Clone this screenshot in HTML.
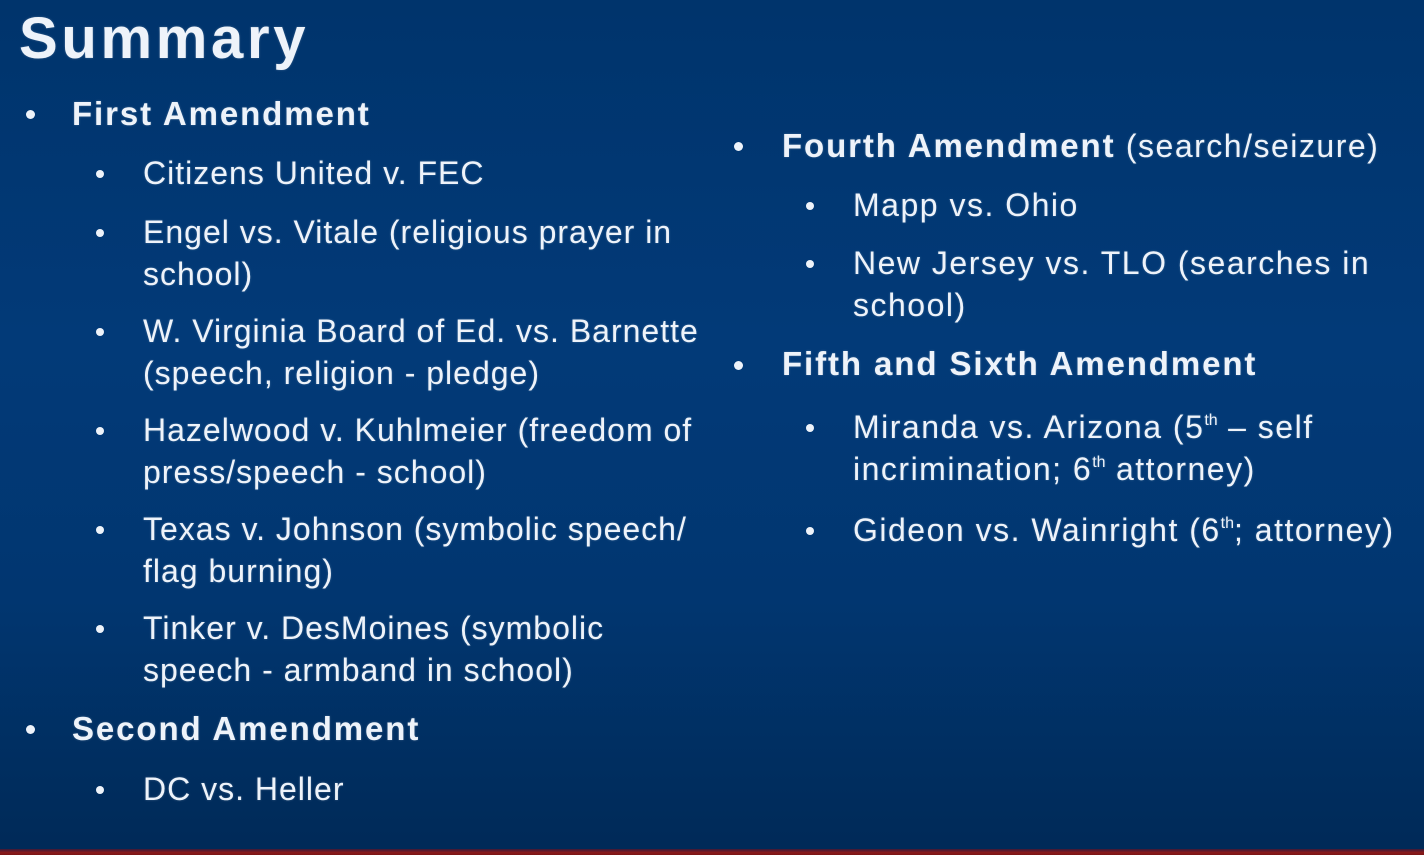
<!DOCTYPE html>
<html><head><meta charset="utf-8"><style>
html,body{margin:0;padding:0}
body{width:1424px;height:855px;overflow:hidden;position:relative;font-family:"Liberation Sans",Arial,sans-serif;color:#eef3fa;
background:linear-gradient(180deg,#00346c 0%,#023a78 40%,#013670 70%,#002a58 99%);}
.r{position:absolute;white-space:nowrap;line-height:42px;font-size:32px;letter-spacing:1px;text-shadow:0 0 2px rgba(255,255,255,.25)}
.rr{letter-spacing:1.5px}
.b{font-weight:bold;font-size:33px;letter-spacing:1.9px}
.d{position:absolute;width:9px;height:9px;border-radius:50%;background:#eef3fa}
.ds{width:8px;height:8px}
sup{font-size:16px;vertical-align:13px;line-height:0;letter-spacing:0}
#bar{position:absolute;left:0;right:0;bottom:0;height:6px;background:linear-gradient(180deg,#3a1a3a,#8a1a1a 60%,#7a1414)}
</style></head><body>
<div class="r b" style="left:19px;top:8px;font-size:58px;letter-spacing:3.7px;line-height:62px">Summary</div>

<div class="d" style="left:26px;top:110px"></div>
<div class="r b" style="left:72px;top:93px">First Amendment</div>

<div class="d ds" style="left:96px;top:170px"></div>
<div class="r" style="left:143px;top:152px">Citizens United v. FEC</div>
<div class="d ds" style="left:96px;top:229px"></div>
<div class="r" style="left:143px;top:211px">Engel vs. Vitale (religious prayer in<br>school)</div>
<div class="d ds" style="left:96px;top:328px"></div>
<div class="r" style="left:143px;top:310px">W. Virginia Board of Ed. vs. Barnette<br>(speech, religion - pledge)</div>
<div class="d ds" style="left:96px;top:427px"></div>
<div class="r" style="left:143px;top:409px">Hazelwood v. Kuhlmeier (freedom of<br>press/speech - school)</div>
<div class="d ds" style="left:96px;top:526px"></div>
<div class="r" style="left:143px;top:508px">Texas v. Johnson (symbolic speech/<br>flag burning)</div>
<div class="d ds" style="left:96px;top:625px"></div>
<div class="r" style="left:143px;top:607px">Tinker v. DesMoines (symbolic<br>speech - armband in school)</div>

<div class="d" style="left:26px;top:725px"></div>
<div class="r b" style="left:72px;top:708px">Second Amendment</div>
<div class="d ds" style="left:96px;top:786px"></div>
<div class="r" style="left:143px;top:768px">DC vs. Heller</div>

<div class="d" style="left:734px;top:142px"></div>
<div class="r rr" style="left:782px;top:125px"><span class="b">Fourth Amendment</span> (search/seizure)</div>
<div class="d ds" style="left:806px;top:202px"></div>
<div class="r rr" style="left:853px;top:184px">Mapp vs. Ohio</div>
<div class="d ds" style="left:806px;top:260px"></div>
<div class="r rr" style="left:853px;top:242px">New Jersey vs. TLO (searches in<br>school)</div>
<div class="d" style="left:734px;top:361px"></div>
<div class="r b" style="left:782px;top:343px">Fifth and Sixth Amendment</div>
<div class="d ds" style="left:806px;top:424px"></div>
<div class="r rr" style="left:853px;top:406px">Miranda vs. Arizona (5<sup>th</sup> – self<br>incrimination; 6<sup>th</sup> attorney)</div>
<div class="d ds" style="left:806px;top:527px"></div>
<div class="r rr" style="left:853px;top:509px">Gideon vs. Wainright (6<sup>th</sup>; attorney)</div>

<div id="bar"></div>
</body></html>
